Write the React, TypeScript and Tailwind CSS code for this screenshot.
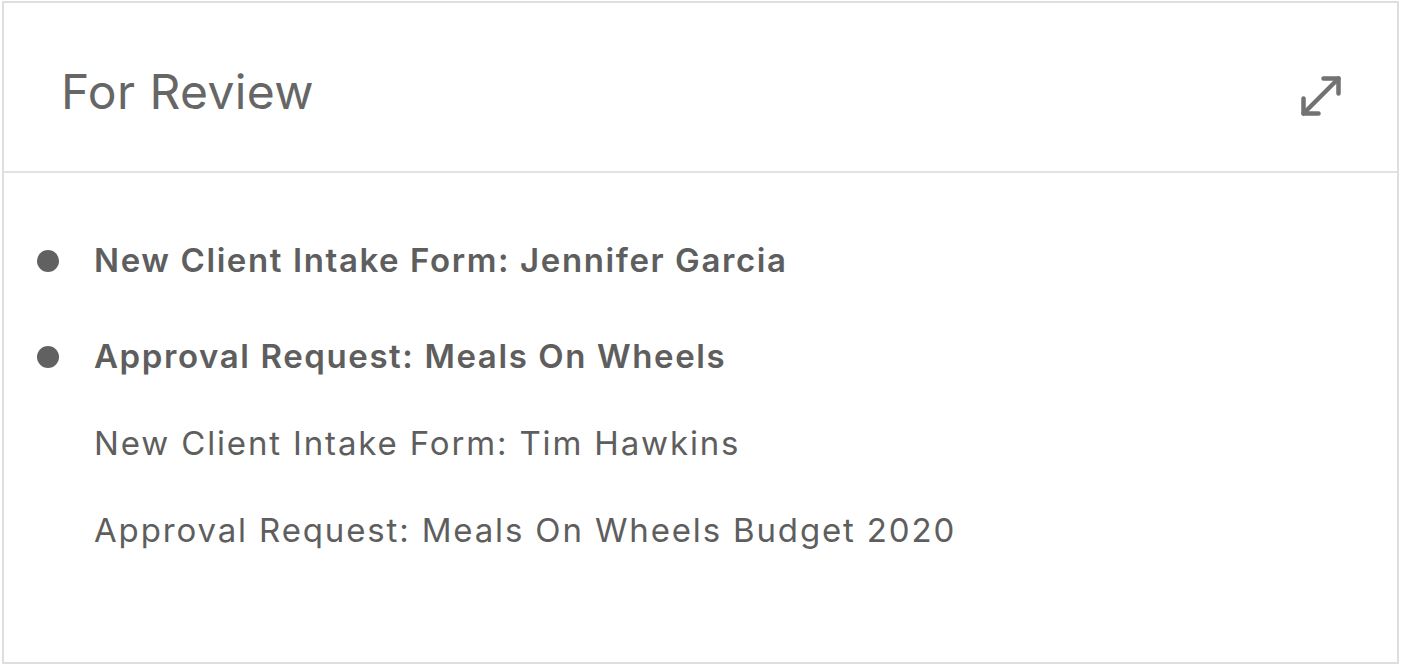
import { MoveDiagonal } from "lucide-react";

const items = [
  { label: "New Client Intake Form: Jennifer Garcia", unread: true },
  { label: "Approval Request: Meals On Wheels", unread: true },
  { label: "New Client Intake Form: Tim Hawkins", unread: false },
  { label: "Approval Request: Meals On Wheels Budget 2020", unread: false },
];

export default function App() {
  return (
    <main
      className="w-[1401px] h-[665px] bg-white px-[2px] pt-px pb-[1px]"
      style={{ fontFamily: "Inter, 'Liberation Sans', sans-serif" }}
    >
      <div className="h-full border-2 border-[#dedede] bg-white flex flex-col">
        {/* Header */}
        <div className="h-[170px] flex items-center justify-between pl-[57px] pr-[46px] border-b-2 border-[#e2e2e2]">
          <h1 className="text-[48px] font-normal text-[#666666] tracking-[0.4px] mt-[10px]">For Review</h1>
          <MoveDiagonal className="w-[60px] h-[60px] text-[#727272] mt-[18px]" strokeWidth={1.8} />
        </div>

        {/* Items */}
        <ul className="pl-[33px] pt-[64px]">
          {items.map((item, i) => (
            <li
              key={item.label}
              className={`flex items-center h-[48px] ${i === 0 ? "" : i === 1 ? "mt-[48px]" : "mt-[39px]"}`}
            >
              <span
                className={`w-[22px] h-[22px] rounded-full shrink-0 ${item.unread ? "bg-[#616161]" : "bg-transparent"}`}
              ></span>
              <span
                className={`ml-[35px] text-[33px] text-[#5e5e5e] ${item.unread ? "font-semibold tracking-[1.6px]" : "font-normal tracking-[1.85px]"}`}
              >
                {item.label}
              </span>
            </li>
          ))}
        </ul>
      </div>
    </main>
  );
}
